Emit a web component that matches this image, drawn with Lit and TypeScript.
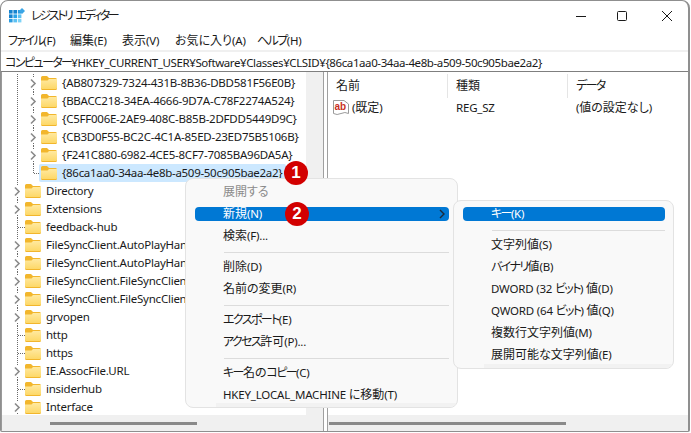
import { LitElement, html, css, svg } from "lit";
import { customElement } from "lit/decorators.js";

type Row = { t: string; lvl: number; kind: "c" | "t" | "l"; sel?: boolean };

const rows: Row[] = [
  { t: "{AB807329-7324-431B-8B36-DBD581F56E0B}", lvl: 1, kind: "c" },
  { t: "{BBACC218-34EA-4666-9D7A-C78F2274A524}", lvl: 1, kind: "c" },
  { t: "{C5FF006E-2AE9-408C-B85B-2DFDD5449D9C}", lvl: 1, kind: "c" },
  { t: "{CB3D0F55-BC2C-4C1A-85ED-23ED75B5106B}", lvl: 1, kind: "c" },
  { t: "{F241C880-6982-4CE5-8CF7-7085BA96DA5A}", lvl: 1, kind: "c" },
  { t: "{86ca1aa0-34aa-4e8b-a509-50c905bae2a2}", lvl: 1, kind: "l", sel: true },
  { t: "Directory", lvl: 0, kind: "c" },
  { t: "Extensions", lvl: 0, kind: "c" },
  { t: "feedback-hub", lvl: 0, kind: "t" },
  { t: "FileSyncClient.AutoPlayHandler", lvl: 0, kind: "c" },
  { t: "FileSyncClient.AutoPlayHandler", lvl: 0, kind: "c" },
  { t: "FileSyncClient.FileSyncClient", lvl: 0, kind: "c" },
  { t: "FileSyncClient.FileSyncClient", lvl: 0, kind: "c" },
  { t: "grvopen", lvl: 0, kind: "c" },
  { t: "http", lvl: 0, kind: "t" },
  { t: "https", lvl: 0, kind: "t" },
  { t: "IE.AssocFile.URL", lvl: 0, kind: "c" },
  { t: "insiderhub", lvl: 0, kind: "t" },
  { t: "Interface", lvl: 0, kind: "c" },
];

type MI = { t?: string; sep?: boolean; dis?: boolean; hl?: boolean; arrow?: boolean };
const menu1: MI[] = [
  { t: "展開する", dis: true },
  { t: "新規(N)", hl: true, arrow: true },
  { t: "検索(F)..." },
  { sep: true },
  { t: "削除(D)" },
  { t: "名前の変更(R)" },
  { sep: true },
  { t: "エクスポート(E)" },
  { t: "アクセス許可(P)..." },
  { sep: true },
  { t: "キー名のコピー(C)" },
  { t: "HKEY_LOCAL_MACHINE に移動(T)" },
];
const menu2: MI[] = [
  { t: "キー(K)", hl: true },
  { sep: true },
  { t: "文字列値(S)" },
  { t: "バイナリ値(B)" },
  { t: "DWORD (32 ビット) 値(D)" },
  { t: "QWORD (64 ビット) 値(Q)" },
  { t: "複数行文字列値(M)" },
  { t: "展開可能な文字列値(E)" },
];

/* Latin and katakana runs are set tighter than the kanji around them. */
const txt = (s: string) =>
  s
    .split(/([\x20-\x7e¥]+|[\u30a0-\u30ff]+)/)
    .filter(Boolean)
    .map((p) =>
      /^[\x20-\x7e¥]/.test(p)
        ? html`<span class="lat">${p}</span>`
        : /^[\u30a0-\u30ff]/.test(p)
        ? html`<span class="kana">${p}</span>`
        : p
    );

const guide = (kind: "v" | "c" | "t" | "l") => html`<svg class="cell" width="16" height="18" viewBox="0 0 16 18">
  ${kind === "l"
    ? svg`<path d="M8.5 0V9.5H16" fill="none" stroke="#6a6a6a" stroke-dasharray="1 1"/>`
    : kind === "t"
    ? svg`<path d="M8.5 0V18M9 9.5H16" fill="none" stroke="#6a6a6a" stroke-dasharray="1 1"/>`
    : kind === "v"
    ? svg`<path d="M8.5 0V18" fill="none" stroke="#6a6a6a" stroke-dasharray="1 1"/>`
    : svg`<path d="M8.5 0V4M8.5 15V18" fill="none" stroke="#6a6a6a" stroke-dasharray="1 1"/>
          <path d="M6 5.5L10 9.5L6 13.5" fill="none" stroke="#8a8a8a" stroke-width="1.6"/>`}
</svg>`;

const folder = html`<svg class="folder" width="16" height="14" viewBox="0 0 16 14">
  <defs><linearGradient id="fg" x1="0" y1="0" x2="0" y2="1"><stop offset="0" stop-color="#ffe9a0"/><stop offset="1" stop-color="#fdd868"/></linearGradient></defs>
  <path d="M0 1.5A1.5 1.5 0 0 1 1.5 0H6L8 2H14.5A1.5 1.5 0 0 1 16 3.5V12.5A1.5 1.5 0 0 1 14.5 14H1.5A1.5 1.5 0 0 1 0 12.5Z" fill="#f2b62c"/>
  <path d="M0 4.5L6.5 4.5L8 3H16V12A1 1 0 0 1 15 13H1A1 1 0 0 1 0 12Z" fill="url(#fg)"/>
</svg>`;

@customElement("app-root")
export class AppRoot extends LitElement {
  static styles = css`
    :host {
      display: block;
      position: relative;
      width: 691px;
      height: 433px;
      overflow: hidden;
      background: #fff;
      font-family: "Noto Sans", "Noto Sans CJK JP", sans-serif;
      font-size: 12px;
      font-feature-settings: "palt";
      color: #1a1a1a;
    }
    .lat { font-size: 11.5px; letter-spacing: -0.2px; }
    .kana { letter-spacing: -1.6px; }
    .lbl .lat { letter-spacing: -0.24px; }
    .sel .lbl .lat { letter-spacing: -0.3px; }
    .addr .lat { letter-spacing: -0.4px; }
    .win {
      box-sizing: border-box;
      width: 690px;
      height: 432px;
      border: 1px solid #8f8f8f;
      border-right-width: 2px;
      border-radius: 8px 8px 2px 2px;
      background: #fff;
      display: flex;
      flex-direction: column;
      overflow: hidden;
    }
    .title {
      height: 29px;
      flex: none;
      display: flex;
      align-items: center;
      padding-left: 8px;
    }
    .title .cap { margin-left: 6px; margin-top: 1px; line-height: 16px; letter-spacing: -2.3px; word-spacing: 3px; }
    .ctrls { margin-left: auto; display: flex; }
    .ctrls svg { display: block; }
    .menubar {
      height: 20px;
      flex: none;
      display: flex;
      align-items: center;
      padding-left: 7px;
    }
    .menubar span { line-height: 16px; margin-top: 2px; flex: none; }
    .menubar span span { margin-top: 0; }
    .m-a { width: 62px; }
    .m-b { width: 52px; }
    .m-c { width: 53px; }
    .m-d { width: 82px; }
    .addr {
      flex: none;
      margin-top: 0;
      border-top: 2px solid #f0f0f0;
      height: 19px;
      padding-left: 4px;
      display: flex;
      align-items: center;
      white-space: pre;
      border-bottom: 1px solid #7f7f7f;
    }
    .panes { flex: 1; display: flex; min-height: 0; }
    .tree-pane {
      width: 322px;
      flex: none;
      display: flex;
      flex-direction: column;
      border-left: 1px solid #9a9a9a;
      box-sizing: border-box;
    }
    .tree-top { flex: 1; display: flex; min-height: 0; }
    .tree { width: 304px; flex: none; padding-top: 2px; overflow: hidden; }
    .vbar { flex: 1; background: #f0f0f0; }
    .hbar { height: 16px; flex: none; background: #f0f0f0; display: flex; align-items: center; }
    .thumb { height: 3px; background: #8a8a8a; }
    .tree-pane .thumb { width: 147px; margin-left: 48px; margin-top: 1px; }
    .split { width: 5px; flex: none; border-left: 1px solid #a0a0a0; border-right: 1px solid #a0a0a0; box-sizing: border-box; }
    .right { flex: 1; display: flex; flex-direction: column; min-width: 0; }
    .list { flex: 1; padding-top: 2px; }
    .right .thumb { width: 237px; margin-left: 1px; margin-top: 1px; }
    .cols { display: flex; height: 24px; }
    .cols div { box-sizing: border-box; padding: 4px 0 0 8px; border-right: 1px solid #e5e5e5; line-height: 16px; height: 24px; }
    .c1 { width: 120px; }
    .c2 { width: 120px; }
    .c3 { width: 118px; border-right: none !important; }
    .val { display: flex; align-items: center; height: 18px; }
    .val .icon { margin-left: 5px; margin-right: 3px; display: block; }
    .val .v1 { width: 104px; }
    .val .v2 { width: 120px; }
    .row {
      display: flex;
      align-items: center;
      height: 18px;
      padding-left: 7px;
      white-space: nowrap;
    }
    .cell { flex: none; display: block; }
    .level-wrap { display: flex; align-items: center; height: 18px; border-radius: 2px; }
    .folder { flex: none; display: block; }
    .lbl { margin-left: 5px; line-height: 16px; }
    .sel { background: #cce8ff; margin-left: -2px; padding-left: 2px; padding-right: 4px; }
    .menu {
      position: absolute;
      box-sizing: border-box;
      background: #f9f9f9;
      border: 1px solid #e3e3e3;
      border-radius: 8px;
      padding: 2px 8px 2px 9px;
      white-space: nowrap;
      overflow: hidden;
    }
    .menu::after {
      content: "";
      position: absolute;
      left: 30px;
      right: 0;
      bottom: 0;
      height: 4px;
      background: #f2f2f2;
    }
    .m1 { left: 185px; top: 178px; width: 273px; height: 230px; }
    .m2 { left: 453px; top: 200px; width: 221px; height: 169px; }
    .item { height: 22px; display: flex; align-items: center; }
    .item .in {
      flex: 1;
      height: 14px;
      display: flex;
      align-items: center;
      border-radius: 4px;
      padding-left: 28px;
      line-height: 14px;
    }
    .item.dis { color: #8b8b8b; }
    .item.hl .in { background: #0078d4; color: #fff; }
    .item .arrow { margin-left: auto; margin-right: 4px; display: block; }
    .sep { height: 9px; display: flex; align-items: center; padding-left: 29px; }
    .sep div { flex: 1; height: 1px; background: #dcdcdc; margin-top: 1px; }
    .badge {
      position: absolute;
      width: 24px;
      height: 24px;
      border-radius: 50%;
      background: #d20000;
      color: #fff;
      font: 700 17px/24px "Liberation Sans", sans-serif;
      text-align: center;
    }
    .b1 { left: 284px; top: 161px; }
    .b2 { left: 285px; top: 202px; }
  `;

  private renderRow(r: Row) {
    return html`<div class="row">
      ${r.lvl === 1 ? guide("v") : ""}
      ${guide(r.kind)}
      <div class="level-wrap ${r.sel ? "sel" : ""}">
        ${folder}
        <span class="lbl">${txt(r.t)}</span>
      </div>
    </div>`;
  }

  private renderMenu(items: MI[]) {
    return items.map((m) =>
      m.sep
        ? html`<div class="sep"><div></div></div>`
        : html`<div class="item ${m.dis ? "dis" : ""} ${m.hl ? "hl" : ""}">
            <div class="in">
              <span>${txt(m.t ?? "")}</span>
              ${m.arrow
                ? html`<svg class="arrow" width="6" height="10" viewBox="0 0 6 10"><path d="M1 1L5 5L1 9" fill="none" stroke="#1a2a3a" stroke-width="1.4"/></svg>`
                : ""}
            </div>
          </div>`
    );
  }

  render() {
    return html`
      <div class="win">
        <div class="title">
          <svg width="16" height="16" viewBox="0 0 16 16">
            <g fill="#29a3e8">
              <rect x="0" y="2" width="3.6" height="3.6" fill="#1583cf"/><rect x="4.4" y="2" width="3.6" height="3.6" fill="#1583cf"/><rect x="8.8" y="2" width="3.6" height="3.6" fill="#2a9be0"/>
              <rect x="0" y="6.4" width="3.6" height="3.6" fill="#1583cf"/><rect x="4.4" y="6.4" width="3.6" height="3.6"/><rect x="8.8" y="6.4" width="3.6" height="3.6" fill="#5cc1f2"/>
              <rect x="0" y="10.8" width="3.6" height="3.6" fill="#2a9be0"/><rect x="4.4" y="10.8" width="3.6" height="3.6" fill="#5cc1f2"/><rect x="8.8" y="10.8" width="3.6" height="3.6" fill="#7dd3f7"/>
            </g>
            <path d="M13 0L16 3L13 6L10 3Z" fill="#3aa5e6"/>
          </svg>
          <span class="cap">レジストリ エディター</span>
          <div class="ctrls">
            <svg width="122" height="29" viewBox="0 0 122 29">
              <path d="M10 15.5H20" stroke="#1a1a1a" fill="none"/>
              <rect x="51.5" y="10.5" width="9" height="9" rx="1" stroke="#1a1a1a" fill="none"/>
              <path d="M96 10L106 20M106 10L96 20" stroke="#1a1a1a" fill="none"/>
            </svg>
          </div>
        </div>
        <div class="menubar">
          <span class="m-a">${txt("ファイル(F)")}</span>
          <span class="m-b">${txt("編集(E)")}</span>
          <span class="m-c">${txt("表示(V)")}</span>
          <span class="m-d">${txt("お気に入り(A)")}</span>
          <span>${txt("ヘルプ(H)")}</span>
        </div>
        <div class="addr"><span>${txt("コンピューター¥HKEY_CURRENT_USER¥Software¥Classes¥CLSID¥{86ca1aa0-34aa-4e8b-a509-50c905bae2a2}")}</span></div>
        <div class="panes">
          <div class="tree-pane">
            <div class="tree-top">
              <div class="tree">${rows.map((r) => this.renderRow(r))}</div>
              <div class="vbar"></div>
            </div>
            <div class="hbar"><div class="thumb"></div></div>
          </div>
          <div class="split"></div>
          <div class="right">
            <div class="list">
              <div class="cols">
                <div class="c1">名前</div>
                <div class="c2">種類</div>
                <div class="c3">${txt("データ")}</div>
              </div>
              <div class="val">
                <svg class="icon" width="16" height="16" viewBox="0 0 16 16">
                  <path d="M0.5 1.5H11L15.5 5V14.5Q12 12.5 8 14.5T0.5 14.5Z" fill="#fff" stroke="#9a9a9a"/>
                  <text x="1.5" y="10.5" font-family="Liberation Sans" font-weight="700" font-size="10" fill="#c8301e">ab</text>
                </svg>
                <span class="v1">${txt("(既定)")}</span>
                <span class="v2">${txt("REG_SZ")}</span>
                <span>${txt("(値の設定なし)")}</span>
              </div>
            </div>
            <div class="hbar"><div class="thumb"></div></div>
          </div>
        </div>
      </div>
      <div class="menu m1">${this.renderMenu(menu1)}</div>
      <div class="menu m2">${this.renderMenu(menu2)}</div>
      <div class="badge b1">1</div>
      <div class="badge b2">2</div>
    `;
  }
}
